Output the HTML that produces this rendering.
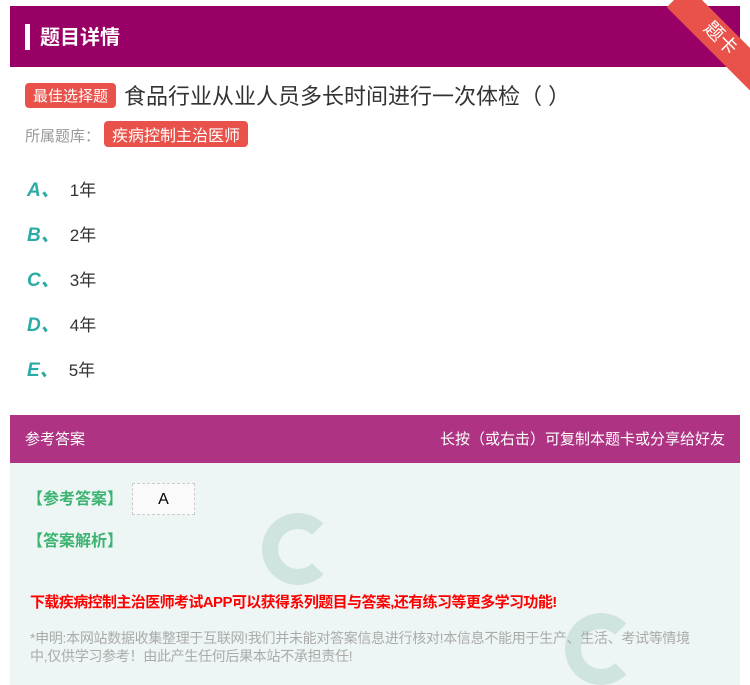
<!DOCTYPE html>
<html><head><meta charset="utf-8"><style>
*{margin:0;padding:0;box-sizing:border-box}
body{width:750px;height:685px;background:#fff;font-family:"Liberation Sans","Noto Sans CJK SC",sans-serif;position:relative;overflow:hidden}
.hd{position:absolute;left:10px;top:6px;width:730px;height:61px;background:#990066}
.hd .bar{position:absolute;left:15px;top:18px;width:5px;height:26px;background:#fff}
.hd .t{position:absolute;left:30px;top:15px;color:#fff;font-size:20px;font-weight:bold}
.rib{position:absolute;left:688px;top:-14px;width:120px;height:30px;background:#e8524a;transform:rotate(45deg);transform-origin:0 0;color:#fff;font-size:19px;text-align:center;line-height:30px}
.tag{display:inline-block;background:#e8524a;color:#fff;border-radius:4px;font-size:15px}
.q{position:absolute;left:25px;top:79px;font-size:22px;color:#333}
.q .tag{padding:2px 8px;margin-right:8px;vertical-align:3px}
.lib{position:absolute;left:25px;top:121px;font-size:15px;color:#999}
.lib .tag{padding:1px 8px;font-size:16px;margin-left:4px}
.opt{position:absolute;left:27px;font-size:17px;color:#333}
.opt b{color:#2aaba3;font-style:italic;font-size:19px;margin-right:10px}
.ah{position:absolute;left:10px;top:415px;width:730px;height:48px;background:#ae3383;color:#fff;font-size:15px}
.ah .l{position:absolute;left:15px;top:13px}.ah .r{position:absolute;right:15px;top:13px}
.ab{position:absolute;left:10px;top:463px;width:730px;height:222px;background:#eef6f5}
.g{position:absolute;color:#3cb371;font-size:16px;font-weight:bold}
.red{position:absolute;left:20px;top:128px;color:#f00;font-size:15px;font-weight:bold;letter-spacing:-0.6px}
.note{position:absolute;left:20px;top:166px;width:672px;color:#aaa;font-size:14px;line-height:18px;letter-spacing:-0.3px}
.img{position:absolute;left:122px;top:20px;width:63px;height:32px;background:#fafafa;border:1px dashed #ccc;font-size:16px;text-align:center;line-height:32px}
.ring{position:absolute;width:72px;height:72px;border-radius:50%;border:16px solid #cfe3df;border-right-color:#eef6f5}
</style></head><body>
<div class="hd"><div class="bar"></div><div class="t">题目详情</div></div>
<div class="rib">题卡</div>
<div class="q"><span class="tag">最佳选择题</span>食品行业从业人员多长时间进行一次体检（ ）</div>
<div class="lib">所属题库：<span class="tag">疾病控制主治医师</span></div>
<div class="opt" style="top:175px"><b>A、</b>1年</div>
<div class="opt" style="top:220px"><b>B、</b>2年</div>
<div class="opt" style="top:265px"><b>C、</b>3年</div>
<div class="opt" style="top:310px"><b>D、</b>4年</div>
<div class="opt" style="top:355px"><b>E、</b>5年</div>
<div class="ah"><span class="l">参考答案</span><span class="r">长按（或右击）可复制本题卡或分享给好友</span></div>
<div class="ab">
<div class="ring" style="left:252px;top:50px"></div>
<div class="ring" style="left:555px;top:150px"></div>
<div class="g" style="left:17px;top:22px">【参考答案】</div>
<div class="img">A</div>
<div class="g" style="left:17px;top:64px">【答案解析】</div>
<div class="red">下载疾病控制主治医师考试APP可以获得系列题目与答案,还有练习等更多学习功能!</div>
<div class="note">*申明:本网站数据收集整理于互联网!我们并未能对答案信息进行核对!本信息不能用于生产、生活、考试等情境中,仅供学习参考！由此产生任何后果本站不承担责任!</div>
</div>
</body></html>
